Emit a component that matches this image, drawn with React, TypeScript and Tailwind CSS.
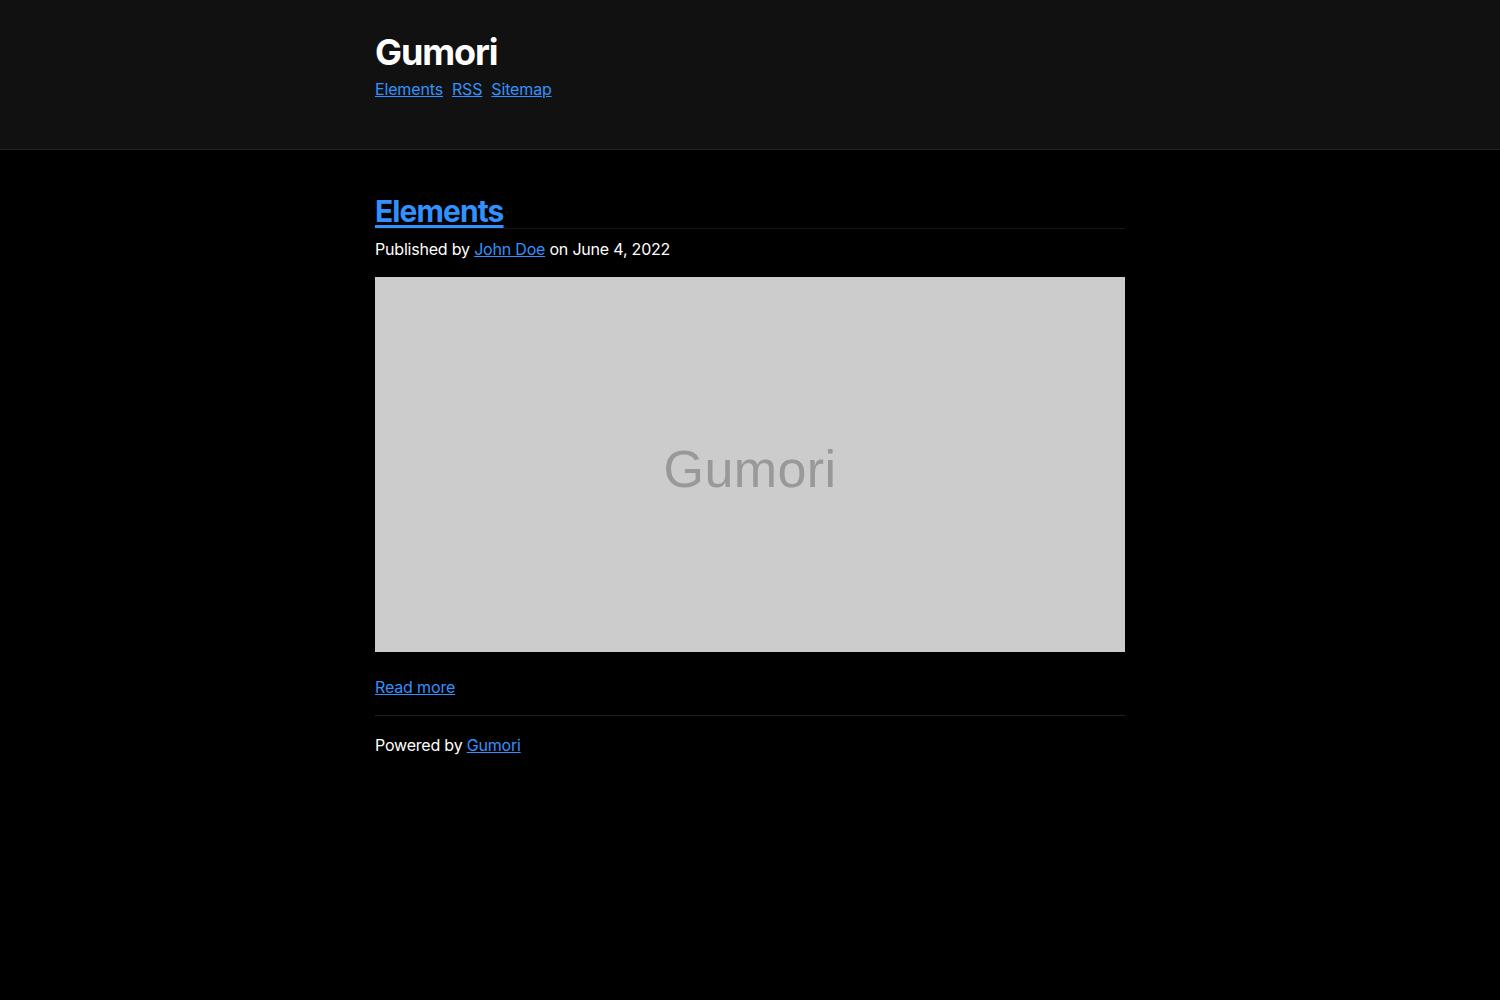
export default function App() {
  return (
    <div className="min-h-[1000px] bg-black text-white font-['Inter',sans-serif] text-base tracking-[-0.15px]">
      {/* Site header */}
      <header className="h-[150px] bg-[#111111] border-b border-[#222222]">
        <div className="w-[750px] mx-auto pt-[30px]">
          <h1 className="text-[36px] leading-[44px] font-bold tracking-[-1.1px]">Gumori</h1>
          <nav className="flex gap-[9px] mt-[4px] text-[16px] leading-[22px]">
            <a href="#" className="text-[#3391ff] underline">Elements</a>
            <a href="#" className="text-[#3391ff] underline">RSS</a>
            <a href="#" className="text-[#3391ff] underline">Sitemap</a>
          </nav>
        </div>
      </header>

      <main className="w-[750px] mx-auto pt-[44px]">
        <article>
          <h2 className="text-[30px] leading-[34px] font-bold tracking-[-0.9px] border-b border-[#161616]">
            <a href="#" className="text-[#3391ff] underline underline-offset-[3px]">Elements</a>
          </h2>
          <p className="mt-[9px] text-[16px] leading-[22px] tracking-[-0.2px]">
            Published by <a href="#" className="text-[#3391ff] underline">John Doe</a> on June 4, 2022
          </p>
          <div className="mt-[17px] h-[375px] bg-[#cccccc] flex items-center justify-center">
            <span className="mt-[8px] font-['Liberation_Sans',Arial,sans-serif] text-[52px] text-[#999999] tracking-[0.4px]">Gumori</span>
          </div>
          <p className="mt-[24px] text-[16px] leading-[22px]">
            <a href="#" className="text-[#3391ff] underline">Read more</a>
          </p>
        </article>
        <footer className="mt-[17px] border-t border-[#222222] pt-[18px] text-[16px] leading-[22px] tracking-[-0.2px]">
          Powered by <a href="#" className="text-[#3391ff] underline">Gumori</a>
        </footer>
      </main>
    </div>
  );
}
